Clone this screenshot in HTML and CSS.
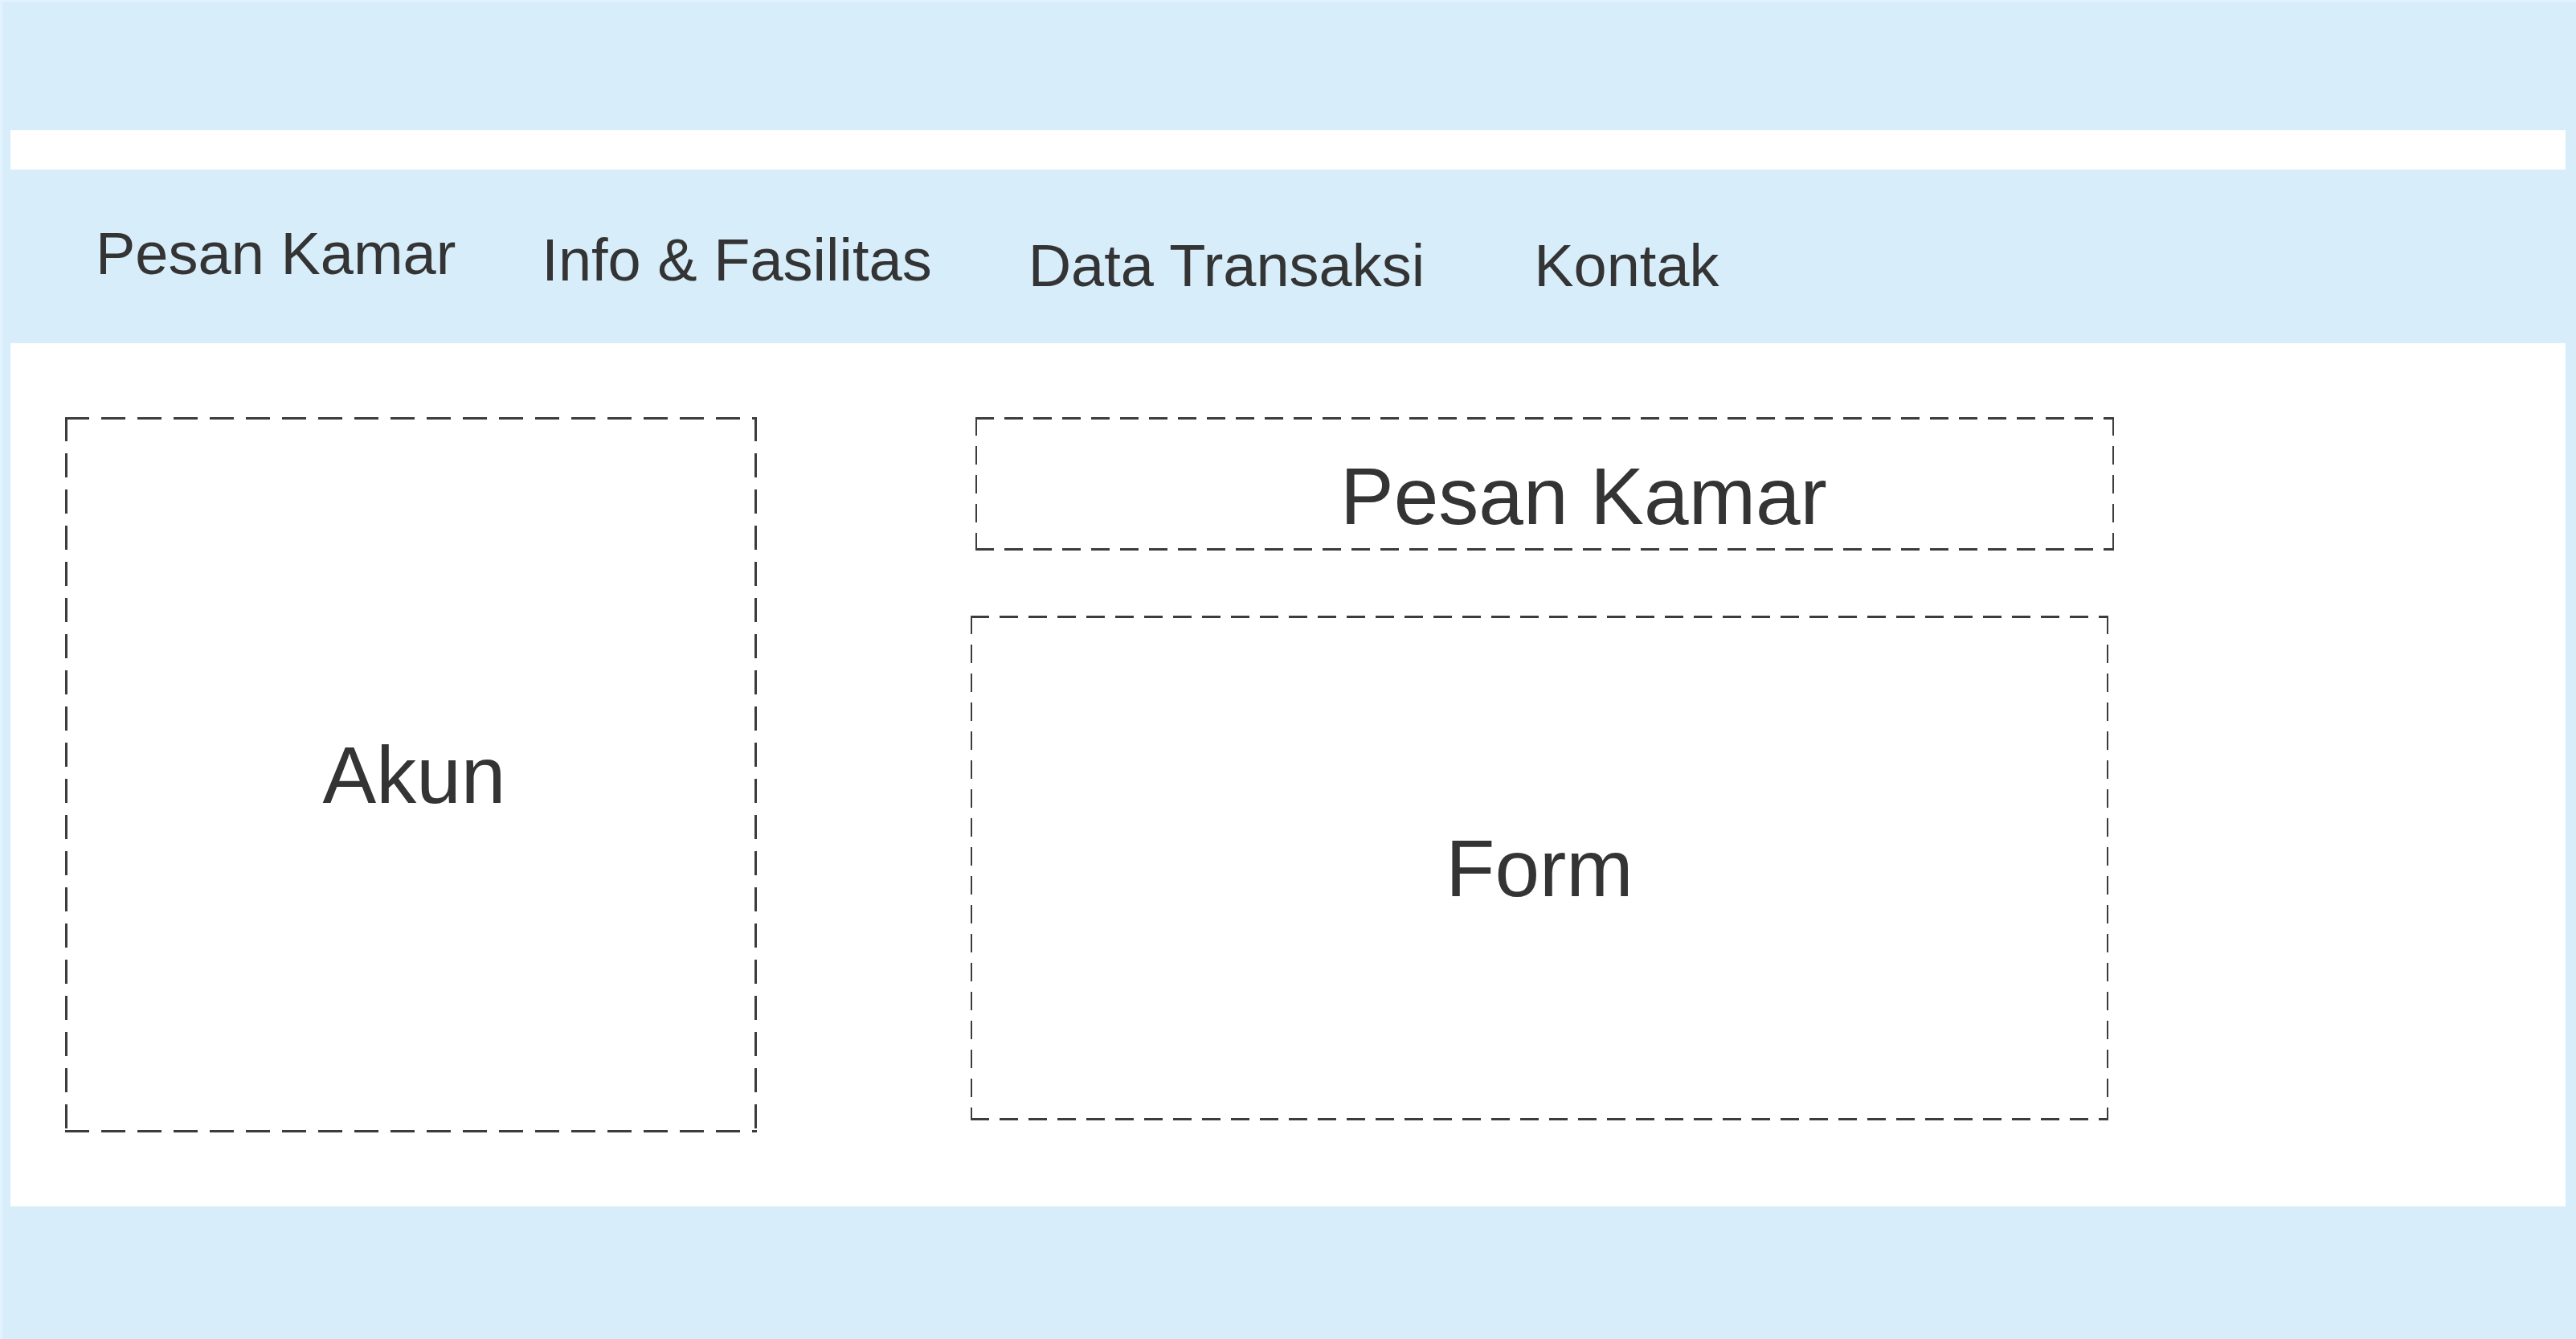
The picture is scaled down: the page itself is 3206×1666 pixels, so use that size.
FILE: index.html
```html
<!DOCTYPE html>
<html lang="id">
<head>
<meta charset="utf-8">
<title>Pesan Kamar</title>
<link rel="stylesheet" href="styles.css">
</head>
<body>
  <div class="frame">
    <div class="top-space"></div>
    <div class="strip"></div>
    <nav class="nav">
      <a class="nav-item nav-item--pesan">Pesan Kamar</a>
      <a class="nav-item nav-item--info">Info &amp; Fasilitas</a>
      <a class="nav-item nav-item--data">Data Transaksi</a>
      <a class="nav-item nav-item--kontak">Kontak</a>
    </nav>
    <main class="main">
      <section class="box box--akun">
        <span class="box-label">Akun</span>
      </section>
      <div class="content">
        <section class="box box--heading">
          <span class="box-label">Pesan Kamar</span>
        </section>
        <section class="box box--form">
          <span class="box-label">Form</span>
        </section>
      </div>
    </main>
  </div>
</body>
</html>
```
FILE: styles.css
```css
* {
  box-sizing: border-box;
}

html, body {
  margin: 0;
  padding: 0;
}

body {
  background: #d7edfa;
  font-family: "Liberation Sans", Arial, sans-serif;
  color: #343434;
  width: 3206px;
  height: 1666px;
  overflow: hidden;
}

.frame {
  display: flex;
  flex-direction: column;
  height: 1666px;
  border-left: 3px solid #e3f3fd;
  border-top: 2px solid #e3f3fd;
}

.top-space {
  height: 160px;
}

.strip {
  height: 49px;
  margin: 0 13px 0 10px;
  background: #ffffff;
}

.nav {
  height: 216px;
  display: flex;
  align-items: flex-start;
  padding: 68px 0 0 116px;
}

.nav-item {
  font-size: 74px;
  line-height: 1;
  white-space: nowrap;
  color: #343434;
}

.nav-item--info {
  margin-left: 107px;
  margin-top: 8px;
}

.nav-item--data {
  margin-left: 120px;
  margin-top: 15px;
}

.nav-item--kontak {
  margin-left: 136px;
  margin-top: 15px;
}

.main {
  height: 1074px;
  margin: 0 13px 0 10px;
  background: #ffffff;
  display: flex;
  align-items: flex-start;
  padding: 92px 0 0 68px;
}

.box {
  --dash: 23px;
  --gap: 13px;
  --th: 3px;
  --tv: 2px;
  --c: #3c3c3c;
  display: flex;
  align-items: center;
  justify-content: center;
  flex: none;
  background:
    repeating-linear-gradient(90deg, var(--c) 0 var(--dash), transparent var(--dash) calc(var(--dash) + var(--gap))) left top / 100% var(--th) no-repeat,
    repeating-linear-gradient(90deg, var(--c) 0 var(--dash), transparent var(--dash) calc(var(--dash) + var(--gap))) left bottom / 100% var(--th) no-repeat,
    repeating-linear-gradient(180deg, var(--c) 0 var(--dash), transparent var(--dash) calc(var(--dash) + var(--gap))) left top / var(--tv) 100% no-repeat,
    repeating-linear-gradient(180deg, var(--c) 0 var(--dash), transparent var(--dash) calc(var(--dash) + var(--gap))) right top / var(--tv) 100% no-repeat;
}

.box-label {
  font-size: 100px;
  line-height: 1;
  white-space: nowrap;
  color: #343434;
}

.box--akun {
  --dash: 30px;
  --gap: 15px;
  --th: 3px;
  --tv: 3px;
  width: 861px;
  height: 890px;
  padding-left: 8px;
}

.content {
  display: flex;
  flex-direction: column;
  align-items: flex-start;
  margin-left: 266px;
}

.box--heading {
  width: 1417px;
  height: 166px;
  margin-left: 6px;
  justify-content: flex-start;
  align-items: flex-start;
  padding: 48px 0 0 454px;
}

.box--form {
  width: 1416px;
  height: 628px;
  margin-top: 81px;
}
```
